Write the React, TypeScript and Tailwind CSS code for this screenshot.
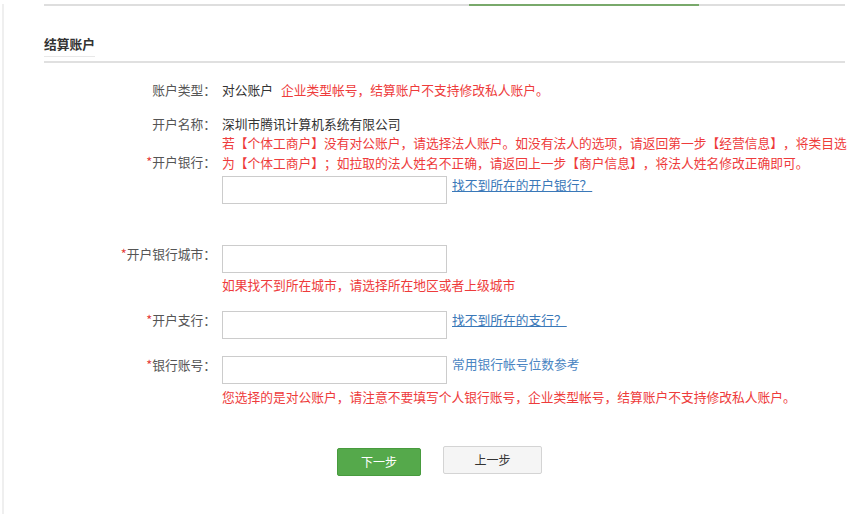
const font = { fontFamily: '"Noto Sans CJK SC", "Noto Sans", sans-serif' };

function Label({ text, required }: { text: string; required?: boolean }) {
  return (
    <div className="w-[172px] shrink-0 text-right leading-[18px] text-[#555555] whitespace-nowrap">
      {required && <span className="text-[#e53935]">*</span>}
      {text}
    </div>
  );
}

function Input() {
  return <div className="h-[28px] w-[225px] shrink-0 border border-[#cccccc] bg-white" />;
}

export default function App() {
  return (
    <div
      className="h-[514px] w-[850px] overflow-hidden bg-white text-[12.75px] [text-spacing-trim:space-all]"
      style={font}
    >
      <div className="ml-[2px] h-full w-[1100px] border-l-2 border-[#efefef] pl-[40px]">
        {/* top tab line */}
        <div className="mt-[4px] flex h-[2px] w-[801px] bg-[#dedede]">
          <div className="w-[425px]" />
          <div className="w-[230px] bg-[#79a96b]" />
        </div>

        {/* section title */}
        <div className="mt-[29px] w-[51px] border-b border-[#e8e8e8] pb-[3px] font-bold leading-[18px] text-[#333333]">
          结算账户
        </div>
        <div className="mt-[4px] h-[2px] w-[801px] bg-[#e0e0e0]" />

        <div className="mt-[18px] flex flex-col">
          {/* account type */}
          <div className="flex gap-[6px]">
            <Label text="账户类型：" />
            <div className="leading-[18px] whitespace-nowrap">
              <span className="text-[#333333]">对公账户</span>
              <span className="ml-[8px] text-[#ee3b3b]">企业类型帐号，结算账户不支持修改私人账户。</span>
            </div>
          </div>

          {/* account name */}
          <div className="mt-[16px] flex gap-[6px]">
            <Label text="开户名称：" />
            <div className="leading-[18px] text-[#333333] whitespace-nowrap">深圳市腾讯计算机系统有限公司</div>
          </div>

          {/* bank */}
          <div className="flex gap-[6px]">
            <div className="mt-[20px]">
              <Label text="开户银行：" required />
            </div>
            <div className="flex flex-col">
              <div className="leading-[20px] text-[#ee3b3b] whitespace-nowrap">
                <div>若【个体工商户】没有对公账户，请选择法人账户。如没有法人的选项，请返回第一步【经营信息】，将类目选</div>
                <div>为【个体工商户】；如拉取的法人姓名不正确，请返回上一步【商户信息】，将法人姓名修改正确即可。</div>
              </div>
              <div className="mt-[3px] flex items-start gap-[5px]">
                <Input />
                <a href="#" className="mt-[1px] leading-[16px] text-[#3a78b8] underline whitespace-nowrap">
                  找不到所在的开户银行？
                </a>
              </div>
            </div>
          </div>

          {/* bank city */}
          <div className="mt-[41px] flex gap-[6px]">
            <Label text="开户银行城市：" required />
            <div className="flex flex-col">
              <Input />
              <div className="mt-[3px] leading-[18px] text-[#ee3b3b] whitespace-nowrap">
                如果找不到所在城市，请选择所在地区或者上级城市
              </div>
            </div>
          </div>

          {/* branch */}
          <div className="mt-[17px] flex gap-[6px]">
            <Label text="开户支行：" required />
            <div className="flex items-start gap-[5px]">
              <Input />
              <a href="#" className="mt-[1px] leading-[16px] text-[#3a78b8] underline whitespace-nowrap">
                找不到所在的支行？
              </a>
            </div>
          </div>

          {/* account number */}
          <div className="mt-[17px] flex gap-[6px]">
            <Label text="银行账号：" required />
            <div className="flex flex-col">
              <div className="flex items-start gap-[5px]">
                <Input />
                <span className="leading-[16px] text-[#4a85c2] whitespace-nowrap">常用银行帐号位数参考</span>
              </div>
              <div className="mt-[4px] leading-[18px] text-[#ee3b3b] whitespace-nowrap">
                您选择的是对公账户，请注意不要填写个人银行账号，企业类型帐号，结算账户不支持修改私人账户。
              </div>
            </div>
          </div>

          {/* buttons */}
          <div className="mt-[40px] ml-[293px] flex items-start gap-[22px]">
            <button className="mt-[2px] h-[28px] w-[84px] rounded-[2px] border border-[#489b3e] bg-[#55a94b] text-[12px] text-[#ffffff]">
              下一步
            </button>
            <button className="h-[28px] w-[99px] rounded-[2px] border border-[#d4d4d4] bg-[#f5f5f5] text-[12px] text-[#333333]">
              上一步
            </button>
          </div>
        </div>
      </div>
    </div>
  );
}
